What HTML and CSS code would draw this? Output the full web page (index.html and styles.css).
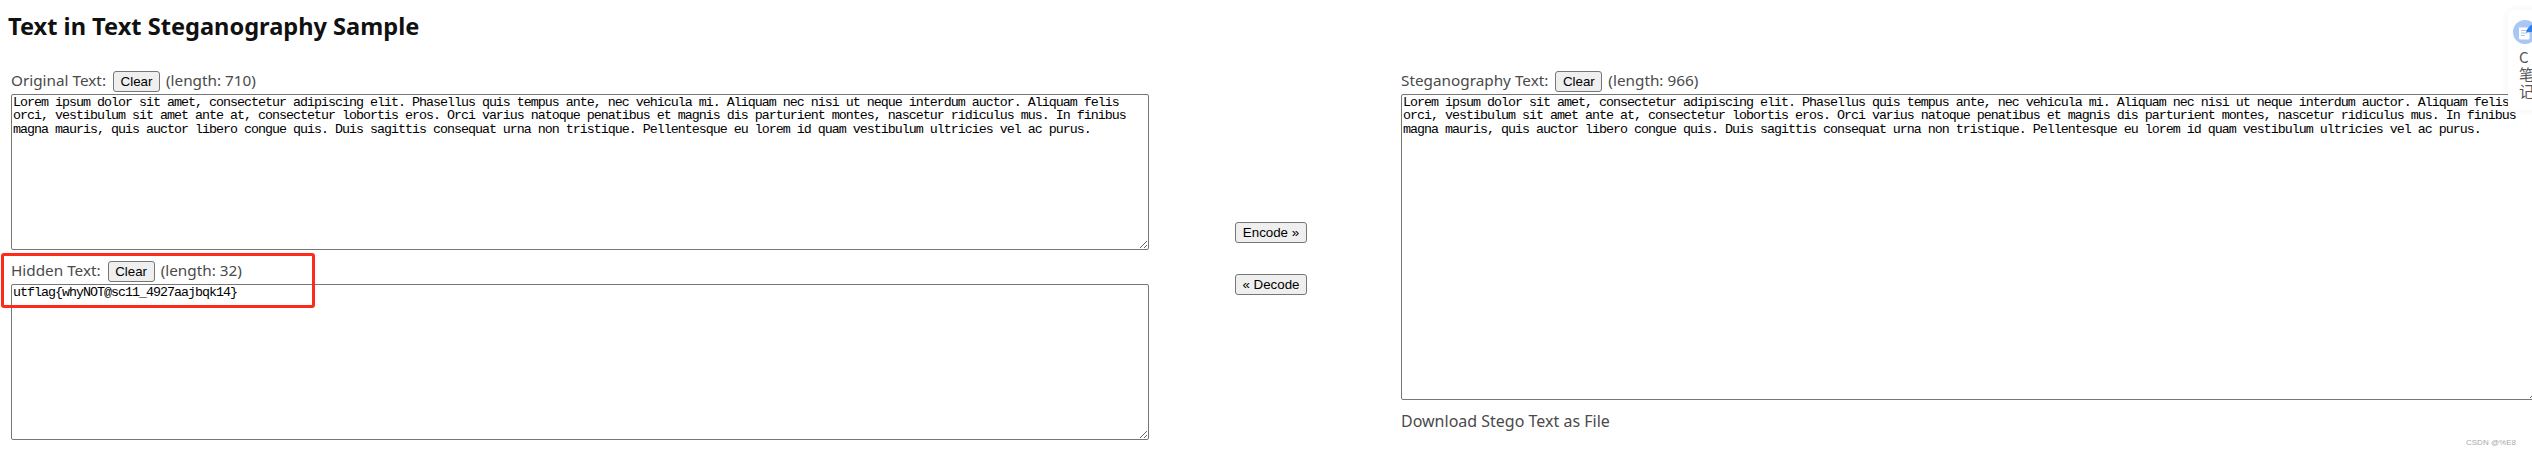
FILE: index.html
```html
<!DOCTYPE html>
<html lang="en">
<head>
<meta charset="utf-8">
<title>Text in Text Steganography Sample</title>
<link rel="stylesheet" href="styles.css">
</head>
<body>
<h1 class="title">Text in Text Steganography Sample</h1>
<main class="tool">
  <section class="col col-left">
    <div class="field">
      <div class="label-row"><span>Original Text:</span><button class="btn" type="button">Clear</button><span>(length: 710)</span></div>
      <textarea class="box box-short" spellcheck="false">Lorem ipsum dolor sit amet, consectetur adipiscing elit. Phasellus quis tempus ante, nec vehicula mi. Aliquam nec nisi ut neque interdum auctor. Aliquam felis orci, vestibulum sit amet ante at, consectetur lobortis eros. Orci varius natoque penatibus et magnis dis parturient montes, nascetur ridiculus mus. In finibus magna mauris, quis auctor libero congue quis. Duis sagittis consequat urna non tristique. Pellentesque eu lorem id quam vestibulum ultricies vel ac purus.</textarea>
    </div>
    <div class="field">
      <div class="label-row"><span>Hidden Text:</span><button class="btn" type="button">Clear</button><span>(length: 32)</span></div>
      <textarea class="box box-short" spellcheck="false">utflag{whyNOT@sc11_4927aajbqk14}</textarea>
    </div>
  </section>
  <section class="col col-mid">
    <button class="btn btn-wide" type="button">Encode »</button>
    <button class="btn btn-wide" type="button">« Decode</button>
  </section>
  <section class="col col-right">
    <div class="label-row"><span>Steganography Text:</span><button class="btn" type="button">Clear</button><span>(length: 966)</span></div>
    <textarea class="box box-tall" spellcheck="false">Lorem ipsum dolor sit amet, consectetur adipiscing elit. Phasellus quis tempus ante, nec vehicula mi. Aliquam nec nisi ut neque interdum auctor. Aliquam felis orci, vestibulum sit amet ante at, consectetur lobortis eros. Orci varius natoque penatibus et magnis dis parturient montes, nascetur ridiculus mus. In finibus magna mauris, quis auctor libero congue quis. Duis sagittis consequat urna non tristique. Pellentesque eu lorem id quam vestibulum ultricies vel ac purus.</textarea>
    <a class="download">Download Stego Text as File</a>
  </section>
</main>
<div class="highlight"></div>
<aside class="widget">
  <svg class="widget-icon" viewBox="0 0 24 24" width="24" height="24" aria-hidden="true">
    <circle cx="12" cy="12" r="12" fill="#a9c6f6"/>
    <path d="M6 7.500h10.500v10.500a1.500 1.500 0 0 1-1.500 1.500H7.500A1.500 1.500 0 0 1 6 18z" fill="#fff"/>
    <path d="M8 10.500h6M8 13h6M8 15.500h4" stroke="#a9c6f6" stroke-width="1"/>
    <path d="M13 12.500C14 7.500 18 4 24 2.500V9c-3 2.500-6.500 3.500-11 3.500z" fill="#2d7cf0"/>
  </svg>
  <span class="widget-c">C</span>
  <span>笔</span>
  <span>记</span>
</aside>
<div class="watermark">CSDN @%E8</div>
</body>
</html>
```

FILE: styles.css
```css
html, body {
  margin: 0;
  padding: 0;
  width: 2532px;
  height: 457px;
  overflow: hidden;
  background: #fff;
}

body {
  position: relative;
  font-family: "Noto Sans", "Noto Sans CJK JP", sans-serif;
  color: #4a4a4a;
}

.title {
  margin: 0;
  padding: 12px 0 0 8px;
  height: 71px;
  box-sizing: border-box;
  font-size: 23.6px;
  line-height: 28px;
  font-weight: 700;
  color: #111;
}

.tool {
  display: flex;
  align-items: flex-start;
  padding-left: 11px;
}

.col {
  display: flex;
  flex-direction: column;
  flex: none;
}

.col-left {
  width: 1138px;
  gap: 11px;
}

.col-mid {
  width: 252px;
  box-sizing: border-box;
  padding: 151px 0 0 86px;
  gap: 31px;
  align-items: flex-start;
}

.col-right {
  width: 1138px;
}

.label-row {
  display: flex;
  align-items: flex-start;
  gap: 6px;
  height: 23px;
  font-size: 15.3px;
  line-height: 19px;
}

.label-row > .btn {
  margin-left: 1px;
}

.btn {
  box-sizing: border-box;
  height: 21px;
  width: 47px;
  padding: 0;
  background: #efefef;
  border: 1px solid #767676;
  border-radius: 3px;
  font-family: "Liberation Sans", Arial, sans-serif;
  font-size: 13.33px;
  color: #000;
}

.btn-wide {
  width: 72px;
}

.box {
  display: block;
  box-sizing: border-box;
  width: 1138px;
  margin: 0;
  padding: 1px;
  border: 1px solid #767676;
  border-radius: 2px;
  background: #fff;
  color: #000;
  font-family: "Liberation Mono", monospace;
  font-size: 13.33px;
  letter-spacing: -1px;
  line-height: 13.33px;
  outline: none;
  overflow: hidden;
}

.box-short {
  height: 156px;
}

.box-tall {
  height: 306px;
}

.download {
  margin-top: 11px;
  font-size: 16px;
  line-height: 20px;
  color: #4a4a4a;
}

.highlight {
  position: absolute;
  left: 1px;
  top: 253px;
  width: 314px;
  height: 55px;
  box-sizing: border-box;
  border: 3px solid #ff2a1a;
  border-radius: 3px;
}

.widget {
  position: absolute;
  left: 2508px;
  top: 10px;
  width: 40px;
  height: 100px;
  box-sizing: border-box;
  padding: 10px 0 0 5px;
  display: flex;
  flex-direction: column;
  background: #fff;
  border-radius: 6px;
  box-shadow: 0 0 8px rgba(0, 0, 0, 0.06);
  font-family: "Noto Sans CJK SC", sans-serif;
  font-size: 15px;
  line-height: 17px;
  color: #555;
}

.widget span {
  padding-left: 6px;
}

.widget-icon {
  flex: none;
  margin-bottom: 4px;
}

.watermark {
  position: absolute;
  left: 2466px;
  top: 438px;
  font-family: "Liberation Sans", Arial, sans-serif;
  font-size: 8px;
  line-height: 10px;
  color: #aaa;
  white-space: nowrap;
}
```
